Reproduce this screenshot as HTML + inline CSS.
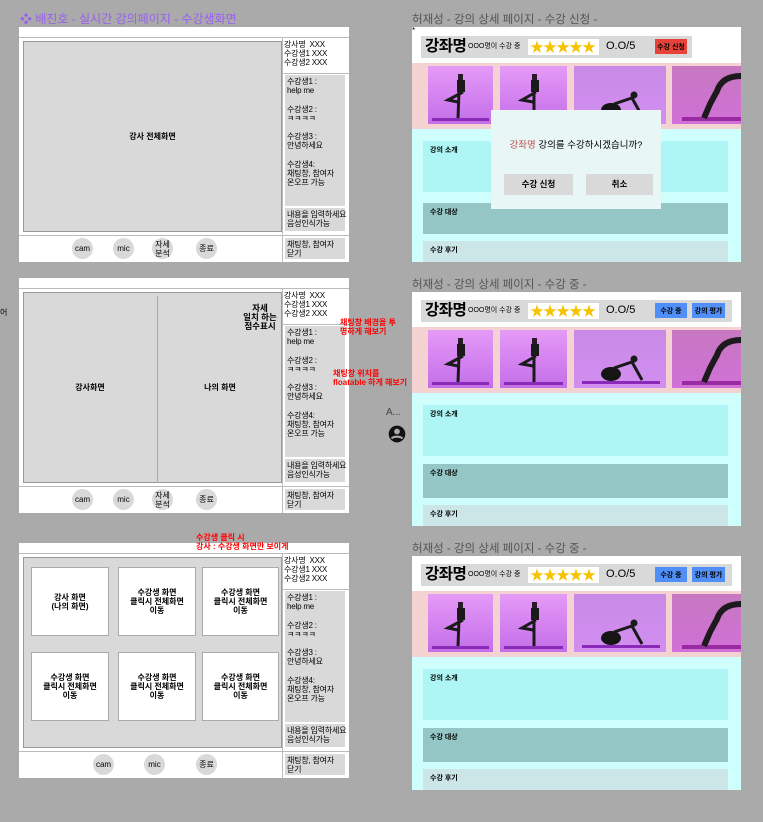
<!DOCTYPE html>
<html><head><meta charset="utf-8">
<style>
*{margin:0;padding:0;box-sizing:border-box}
body{width:763px;height:822px;background:#aaaaaa;position:relative;overflow:hidden;font-family:"Liberation Sans","Noto Sans CJK KR",sans-serif;color:#000}
div,span,svg{position:absolute}
.w{background:#fff}
.g{background:#d9d9d9}
.t{font-size:8px;line-height:9.2px;white-space:nowrap;letter-spacing:-0.2px}
.c{text-align:center;display:flex;align-items:center;justify-content:center;font-size:8px;line-height:9px;font-weight:bold}
.circ{width:21px;height:21px;border-radius:50%;background:#d9d9d9;font-size:8px;line-height:9px;display:flex;align-items:center;justify-content:center;text-align:center}
.hl{height:1px;background:#bbb}
.vl{width:1px;background:#bbb}
.ttl{font-size:11.5px;color:#555;white-space:nowrap}
.red{color:#f00;font-size:8px;line-height:9px;font-weight:bold;white-space:nowrap}
.sec{font-size:7px;font-weight:bold;padding:4px 7px}
.star{color:#f5c400;font-size:14px;line-height:14px;letter-spacing:-1px}
.btnb{background:#4f8ff7;font-size:7px;font-weight:bold;display:flex;align-items:center;justify-content:center}
.km{font-size:15.5px;font-weight:bold;line-height:22px;letter-spacing:-0.5px}
</style></head><body>

<div style="left:20px;top:10px;font-size:12px;color:#9a5ff0;white-space:nowrap">❖ 배진호 - 실시간 강의페이지 - 수강생화면</div>

<!-- LEFT FRAME 1 -->
<div class="w" style="left:19px;top:27px;width:330px;height:235px"></div>
<div class="hl" style="left:19px;top:37px;width:330px"></div>
<div class="g" style="left:23px;top:41px;width:259px;height:191px;border:1px solid #999"></div>
<div class="c" style="left:23px;top:41px;width:259px;height:191px">강사 전체화면</div>
<div class="vl" style="left:282px;top:37px;height:225px"></div>
<div class="t" style="left:284px;top:40px">강사명&nbsp; XXX<br>수강생1 XXX<br>수강생2 XXX</div>
<div class="hl" style="left:282px;top:73px;width:67px"></div>
<div class="g" style="left:285px;top:75px;width:60px;height:131px"></div>
<div class="t" style="left:287px;top:77px">수강생1 :<br>help me<br><br>수강생2 :<br>ㅋㅋㅋㅋ<br><br>수강생3 :<br>안녕하세요<br><br>수강생4:<br>채팅창, 참여자<br>온오프 가능</div>
<div class="g" style="left:285px;top:208px;width:60px;height:23px"></div>
<div class="t" style="left:287px;top:210px">내용을 입력하세요<br>음성인식가능</div>
<div class="hl" style="left:19px;top:235px;width:330px"></div>
<div class="g" style="left:285px;top:238px;width:60px;height:21px"></div>
<div class="t" style="left:287px;top:240px">채팅창, 참여자<br>닫기</div>
<div class="circ" style="left:72px;top:238px">cam</div>
<div class="circ" style="left:113px;top:238px">mic</div>
<div class="circ" style="left:152px;top:238px">자세<br>분석</div>
<div class="circ" style="left:196px;top:238px">종료</div>

<!-- LEFT FRAME 2 -->
<div style="left:0;top:307px;font-size:8px">어</div>
<div class="w" style="left:19px;top:278px;width:330px;height:235px"></div>
<div class="hl" style="left:19px;top:288px;width:330px"></div>
<div class="g" style="left:23px;top:292px;width:259px;height:191px;border:1px solid #999"></div>
<div class="vl" style="left:157px;top:296px;height:187px;background:#aaa"></div>
<div class="c" style="left:23px;top:292px;width:134px;height:191px">강사화면</div>
<div class="c" style="left:158px;top:292px;width:124px;height:191px">나의 화면</div>
<div class="c" style="left:240px;top:304px;width:40px;height:27px;font-size:8.5px">자세<br>일치 하는<br>점수표시</div>
<div class="vl" style="left:282px;top:288px;height:225px"></div>
<div class="t" style="left:284px;top:291px">강사명&nbsp; XXX<br>수강생1 XXX<br>수강생2 XXX</div>
<div class="hl" style="left:282px;top:324px;width:67px"></div>
<div class="g" style="left:285px;top:326px;width:60px;height:131px"></div>
<div class="t" style="left:287px;top:328px">수강생1 :<br>help me<br><br>수강생2 :<br>ㅋㅋㅋㅋ<br><br>수강생3 :<br>안녕하세요<br><br>수강생4:<br>채팅창, 참여자<br>온오프 가능</div>
<div class="g" style="left:285px;top:459px;width:60px;height:23px"></div>
<div class="t" style="left:287px;top:461px">내용을 입력하세요<br>음성인식가능</div>
<div class="hl" style="left:19px;top:486px;width:330px"></div>
<div class="g" style="left:285px;top:489px;width:60px;height:21px"></div>
<div class="t" style="left:287px;top:491px">채팅창, 참여자<br>닫기</div>
<div class="circ" style="left:72px;top:489px">cam</div>
<div class="circ" style="left:113px;top:489px">mic</div>
<div class="circ" style="left:152px;top:489px">자세<br>분석</div>
<div class="circ" style="left:196px;top:489px">종료</div>
<div class="red" style="left:340px;top:318px">채팅창 배경을 투<br>명하게 해보기</div>
<div class="red" style="left:333px;top:369px">채팅창 위치를<br>floatable 하게 해보기</div>
<div style="left:386px;top:407px;font-size:10px;color:#444">A...</div>
<svg style="left:387px;top:424px" width="20" height="20" viewBox="0 0 24 24"><circle cx="12" cy="12" r="10" fill="#111"/><circle cx="12" cy="9" r="3.5" fill="#aaa"/><path d="M5.5 17.5c2-3 11-3 13 0" stroke="#aaa" stroke-width="2.5" fill="none"/></svg>

<!-- LEFT FRAME 3 -->
<div class="w" style="left:19px;top:543px;width:330px;height:235px"></div>
<div class="red" style="left:196px;top:533px">수강생 클릭 시<br>강사 : 수강생 화면만 보이게</div>
<div class="hl" style="left:19px;top:553px;width:330px"></div>
<div class="g" style="left:23px;top:557px;width:259px;height:191px;border:1px solid #999"></div>
<div class="w c" style="left:31px;top:567px;width:78px;height:69px;border:1px solid #aaa">강사 화면<br>(나의 화면)</div>
<div class="w c" style="left:118px;top:567px;width:78px;height:69px;border:1px solid #aaa">수강생 화면<br>클릭시 전체화면<br>이동</div>
<div class="w c" style="left:202px;top:567px;width:77px;height:69px;border:1px solid #aaa">수강생 화면<br>클릭시 전체화면<br>이동</div>
<div class="w c" style="left:31px;top:652px;width:78px;height:69px;border:1px solid #aaa">수강생 화면<br>클릭시 전체화면<br>이동</div>
<div class="w c" style="left:118px;top:652px;width:78px;height:69px;border:1px solid #aaa">수강생 화면<br>클릭시 전체화면<br>이동</div>
<div class="w c" style="left:202px;top:652px;width:77px;height:69px;border:1px solid #aaa">수강생 화면<br>클릭시 전체화면<br>이동</div>
<div class="vl" style="left:282px;top:553px;height:225px"></div>
<div class="t" style="left:284px;top:556px">강사명&nbsp; XXX<br>수강생1 XXX<br>수강생2 XXX</div>
<div class="hl" style="left:282px;top:589px;width:67px"></div>
<div class="g" style="left:285px;top:591px;width:60px;height:131px"></div>
<div class="t" style="left:287px;top:593px">수강생1 :<br>help me<br><br>수강생2 :<br>ㅋㅋㅋㅋ<br><br>수강생3 :<br>안녕하세요<br><br>수강생4:<br>채팅창, 참여자<br>온오프 가능</div>
<div class="g" style="left:285px;top:724px;width:60px;height:23px"></div>
<div class="t" style="left:287px;top:726px">내용을 입력하세요<br>음성인식가능</div>
<div class="hl" style="left:19px;top:751px;width:330px"></div>
<div class="g" style="left:285px;top:754px;width:60px;height:21px"></div>
<div class="t" style="left:287px;top:756px">채팅창, 참여자<br>닫기</div>
<div class="circ" style="left:93px;top:754px">cam</div>
<div class="circ" style="left:144px;top:754px">mic</div>
<div class="circ" style="left:196px;top:754px">종료</div>

<!-- SVG image defs -->
<svg width="0" height="0" style="left:0;top:0"><defs>
<linearGradient id="p1" x1="0" y1="0" x2="0" y2="1"><stop offset="0" stop-color="#e59af8"/><stop offset="1" stop-color="#c46ee8"/></linearGradient>
<linearGradient id="p3" x1="0" y1="0" x2="0" y2="1"><stop offset="0" stop-color="#c88ae6"/><stop offset="1" stop-color="#d28ef0"/></linearGradient>
<linearGradient id="p4" x1="0" y1="0" x2="0" y2="1"><stop offset="0" stop-color="#c878c0"/><stop offset="1" stop-color="#d070d8"/></linearGradient>
<g id="im1"><rect width="65" height="58" fill="url(#p1)"/><rect x="4" y="52" width="57" height="3" fill="#8a2ab8"/><rect x="30" y="8" width="5" height="6" fill="#2a1a2a"/><rect x="29" y="14" width="8" height="12" fill="#1a1a1a"/><path d="M31 26 L30 52 M35 26 L20 34 L30 36" stroke="#1a1a1a" stroke-width="3" fill="none"/></g>
<g id="im2"><rect width="67" height="58" fill="url(#p1)"/><rect x="4" y="52" width="59" height="3" fill="#8a2ab8"/><rect x="32" y="8" width="5" height="6" fill="#2a1a2a"/><rect x="31" y="14" width="8" height="12" fill="#1a1a1a"/><path d="M34 26 L34 52 M36 26 L22 34 L33 36" stroke="#1a1a1a" stroke-width="3" fill="none"/></g>
<g id="im3"><rect width="92" height="58" fill="url(#p3)"/><rect x="8" y="51" width="78" height="3" fill="#8a2ab8"/><ellipse cx="37" cy="44" rx="10" ry="7" fill="#151515"/><path d="M40 38 L58 32 L68 50" stroke="#1a1a1a" stroke-width="3" fill="none"/><circle cx="60" cy="29" r="3.5" fill="#1a1a1a"/></g>
<g id="im4"><rect width="69" height="58" fill="url(#p4)"/><rect x="10" y="51" width="59" height="4" fill="#9a2aa0"/><path d="M69 10 Q50 10 45 25 L38 38 L32 52" stroke="#1d1a1d" stroke-width="6" fill="none"/></g>
</defs></svg>

<!-- RIGHT FRAME A -->
<div class="ttl" style="left:412px;top:11px">허재성 - 강의 상세 페이지 - 수강 신청 -</div>
<div class="w" style="left:412px;top:27px;width:329px;height:235px;overflow:hidden"></div>
<div style="left:412px;top:26px;font-size:8px">*</div>
<div class="g" style="left:421px;top:36px;width:271px;height:22px"></div>
<div class="km" style="left:425px;top:36px">강좌명</div>
<div style="left:468px;top:40px;font-size:7px;line-height:14px;white-space:nowrap">OOO명이 수강 중</div>
<div class="w" style="left:528px;top:39px;width:71px;height:16px"></div>
<div class="star" style="left:530px;top:40px">★★★★★</div>
<div style="left:606px;top:39px;font-size:11px;line-height:14px">O.O/5</div>
<div style="left:655px;top:39px;width:32px;height:15px;background:#e8413a;font-size:7px;font-weight:bold;display:flex;align-items:center;justify-content:center">수강 신청</div>
<div style="left:412px;top:63px;width:329px;height:66px;background:#f4d2d2"></div>
<svg style="left:428px;top:66px" width="65" height="58"><use href="#im1"/></svg>
<svg style="left:500px;top:66px" width="67" height="58"><use href="#im2"/></svg>
<svg style="left:574px;top:66px" width="92" height="58"><use href="#im3"/></svg>
<svg style="left:672px;top:66px" width="69" height="58"><use href="#im4"/></svg>
<div style="left:412px;top:129px;width:329px;height:133px;background:#cffffd"></div>
<div class="sec" style="left:423px;top:141px;width:305px;height:51px;background:#aef5f5">강의 소개</div>
<div class="sec" style="left:423px;top:203px;width:305px;height:31px;background:#94c6c6">수강 대상</div>
<div class="sec" style="left:423px;top:241px;width:305px;height:21px;background:#cce5e6">수강 후기</div>
<div style="left:491px;top:110px;width:170px;height:99px;background:#e8f6f6"></div>
<div style="left:491px;top:137px;width:170px;text-align:center;font-size:9.5px;white-space:nowrap"><span style="position:static;color:#c0504d">강좌명</span> 강의를 수강하시겠습니까?</div>
<div class="g c" style="left:504px;top:174px;width:69px;height:21px;font-size:8.5px">수강 신청</div>
<div class="g c" style="left:586px;top:174px;width:67px;height:21px;font-size:8.5px">취소</div>

<!-- RIGHT FRAME B -->
<div class="ttl" style="left:412px;top:276px">허재성 - 강의 상세 페이지 - 수강 중 -</div>
<div class="w" style="left:412px;top:292px;width:329px;height:234px"></div>
<div class="g" style="left:421px;top:300px;width:311px;height:22px"></div>
<div class="km" style="left:425px;top:300px">강좌명</div>
<div style="left:468px;top:304px;font-size:7px;line-height:14px;white-space:nowrap">OOO명이 수강 중</div>
<div class="w" style="left:528px;top:303px;width:71px;height:16px"></div>
<div class="star" style="left:530px;top:304px">★★★★★</div>
<div style="left:606px;top:303px;font-size:11px;line-height:14px">O.O/5</div>
<div class="btnb" style="left:655px;top:303px;width:32px;height:15px">수강 중</div>
<div class="btnb" style="left:692px;top:303px;width:33px;height:15px">강의 평가</div>
<div style="left:412px;top:327px;width:329px;height:66px;background:#f4d2d2"></div>
<svg style="left:428px;top:330px" width="65" height="58"><use href="#im1"/></svg>
<svg style="left:500px;top:330px" width="67" height="58"><use href="#im2"/></svg>
<svg style="left:574px;top:330px" width="92" height="58"><use href="#im3"/></svg>
<svg style="left:672px;top:330px" width="69" height="58"><use href="#im4"/></svg>
<div style="left:412px;top:393px;width:329px;height:133px;background:#cffffd"></div>
<div class="sec" style="left:423px;top:405px;width:305px;height:51px;background:#aef5f5">강의 소개</div>
<div class="sec" style="left:423px;top:464px;width:305px;height:34px;background:#94c6c6">수강 대상</div>
<div class="sec" style="left:423px;top:505px;width:305px;height:21px;background:#cce5e6">수강 후기</div>

<!-- RIGHT FRAME C -->
<div class="ttl" style="left:412px;top:540px">허재성 - 강의 상세 페이지 - 수강 중 -</div>
<div class="w" style="left:412px;top:556px;width:329px;height:234px"></div>
<div class="g" style="left:421px;top:564px;width:311px;height:22px"></div>
<div class="km" style="left:425px;top:564px">강좌명</div>
<div style="left:468px;top:568px;font-size:7px;line-height:14px;white-space:nowrap">OOO명이 수강 중</div>
<div class="w" style="left:528px;top:567px;width:71px;height:16px"></div>
<div class="star" style="left:530px;top:568px">★★★★★</div>
<div style="left:606px;top:567px;font-size:11px;line-height:14px">O.O/5</div>
<div class="btnb" style="left:655px;top:567px;width:32px;height:15px">수강 중</div>
<div class="btnb" style="left:692px;top:567px;width:33px;height:15px">강의 평가</div>
<div style="left:412px;top:591px;width:329px;height:66px;background:#f4d2d2"></div>
<svg style="left:428px;top:594px" width="65" height="58"><use href="#im1"/></svg>
<svg style="left:500px;top:594px" width="67" height="58"><use href="#im2"/></svg>
<svg style="left:574px;top:594px" width="92" height="58"><use href="#im3"/></svg>
<svg style="left:672px;top:594px" width="69" height="58"><use href="#im4"/></svg>
<div style="left:412px;top:657px;width:329px;height:133px;background:#cffffd"></div>
<div class="sec" style="left:423px;top:669px;width:305px;height:51px;background:#aef5f5">강의 소개</div>
<div class="sec" style="left:423px;top:728px;width:305px;height:34px;background:#94c6c6">수강 대상</div>
<div class="sec" style="left:423px;top:769px;width:305px;height:21px;background:#cce5e6">수강 후기</div>

</body></html>
